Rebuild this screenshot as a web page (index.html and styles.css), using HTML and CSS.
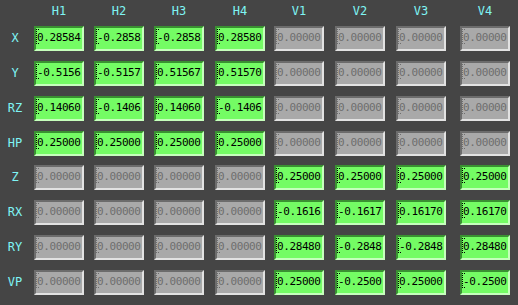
FILE: index.html
```html
<!DOCTYPE html>
<html lang="en">
<head>
    <meta charset="UTF-8">
    <title>Joint Gains</title>
    <link rel="stylesheet" href="styles.css">
</head>
<body>
    <div class="panel" id="panel"></div>

    <script>
        const cols = ['H1', 'H2', 'H3', 'H4', 'V1', 'V2', 'V3', 'V4'];
        const rows = ['X', 'Y', 'RZ', 'HP', 'Z', 'RX', 'RY', 'VP'];

        // one array per row, null = disabled cell
        const values = [
            ['0.28584', '-0.2858', '-0.2858', '0.28580', null, null, null, null],
            ['-0.5156', '-0.5157', '0.51567', '0.51570', null, null, null, null],
            ['0.14060', '-0.1406', '0.14060', '-0.1406', null, null, null, null],
            ['0.25000', '0.25000', '0.25000', '0.25000', null, null, null, null],
            [null, null, null, null, '0.25000', '0.25000', '0.25000', '0.25000'],
            [null, null, null, null, '-0.1616', '-0.1617', '0.16170', '0.16170'],
            [null, null, null, null, '0.28480', '-0.2848', '-0.2848', '0.28480'],
            [null, null, null, null, '0.25000', '-0.2500', '0.25000', '-0.2500']
        ];

        const panel = document.getElementById('panel');

        panel.appendChild(document.createElement('div'));
        cols.forEach(name => {
            const head = document.createElement('div');
            head.className = 'col-label';
            head.textContent = name;
            panel.appendChild(head);
        });

        rows.forEach((name, r) => {
            const label = document.createElement('div');
            label.className = 'row-label';
            label.textContent = name;
            panel.appendChild(label);

            values[r].forEach(v => {
                const cell = document.createElement('div');
                cell.className = v === null ? 'cell off' : 'cell on';
                cell.textContent = v === null ? '0.00000' : v;
                panel.appendChild(cell);
            });
        });
    </script>
</body>
</html>
```

FILE: styles.css
```css
* {
    margin: 0;
    padding: 0;
    box-sizing: border-box;
}

body {
    background: #454545;
    font-family: 'DejaVu Sans Mono', monospace;
    font-size: 11px;
}

.panel {
    display: grid;
    grid-template-columns: 34px 60px 60px 61px 59px 61px 61px 64px 58px;
    grid-template-rows: 26px 35px 35px 35px 34px 35px 35px 35px 35px;
    width: 518px;
    height: 305px;
}

.col-label {
    width: 50px;
    color: #7ff4f4;
    font-size: 12px;
    text-align: center;
    padding-top: 4px;
}

.row-label {
    color: #7ff4f4;
    font-size: 12px;
    text-align: center;
    padding-top: 5px;
    padding-right: 4px;
}

.cell {
    position: relative;
    width: 50px;
    height: 25px;
    border: 2px solid;
    padding-left: 1px;
    line-height: 20px;
    letter-spacing: -0.4px;
    white-space: nowrap;
    overflow: hidden;
}

.cell::before {
    content: '';
    position: absolute;
    left: 0;
    top: 1px;
    width: 2px;
    height: 13px;
    border-left: 1px dotted;
    border-top: 1px dotted;
    border-bottom: 1px dotted;
}

.cell.on {
    background: #74fc64;
    color: #000;
    border-color: #3a9032 #c6ffbc #c6ffbc #3a9032;
}

.cell.off {
    background: #a9a9a9;
    color: #6e6e6e;
    border-color: #6c6c6c #e2e2e2 #e2e2e2 #6c6c6c;
}
```
